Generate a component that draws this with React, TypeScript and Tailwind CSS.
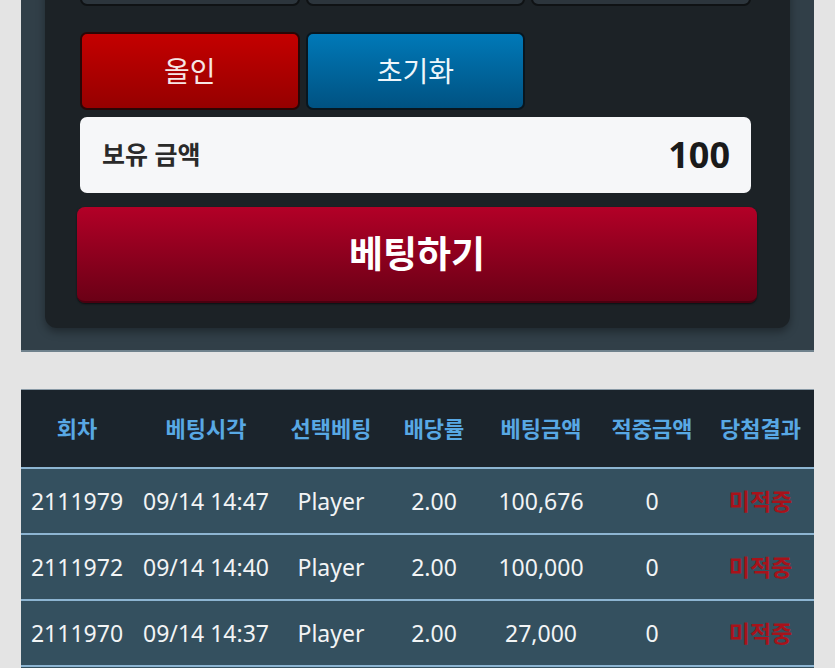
import React from 'react';

// Betting panel + recent bets table
const BETS = [
  { round: '2111979', time: '09/14 14:47', pick: 'Player', odds: '2.00', amount: '100,676', win: '0', result: '미적중' },
  { round: '2111972', time: '09/14 14:40', pick: 'Player', odds: '2.00', amount: '100,000', win: '0', result: '미적중' },
  { round: '2111970', time: '09/14 14:37', pick: 'Player', odds: '2.00', amount: '27,000', win: '0', result: '미적중' },
];

const HEADERS = ['회차', '베팅시각', '선택베팅', '배당률', '베팅금액', '적중금액', '당첨결과'];

const FONT = { fontFamily: '"Noto Sans", "Noto Sans CJK KR", sans-serif' };

export default function App() {
  return (
    <div className="h-[668px] overflow-hidden bg-[#e4e4e4]" style={FONT}>
      {/* Bet panel */}
      <div className="mx-[21px] w-[793px] -mt-[80px] bg-[#313f48] border-b-2 border-[#6f818c] px-[24px] pb-[22px]">
        <div className="rounded-b-[12px] bg-[#1c2226] pl-[35px] pr-[39px] pt-[8px] pb-[25px] shadow-[0_4px_8px_rgba(0,0,0,0.35)]">
          {/* chip row (mostly scrolled off) */}
          <div className="grid grid-cols-3 gap-[6px]">
            {[0, 1, 2].map((i) => (
              <div key={i} className="h-[78px] rounded-[7px] border-2 border-[#0f1214] bg-[#2c353c]" />
            ))}
          </div>

          <div className="mt-[26px] grid grid-cols-3 gap-[6px]">
            <button className="flex h-[78px] items-center justify-center rounded-[7px] border-2 border-[#2a0606] bg-gradient-to-b from-[#c40000] to-[#960000] text-[28px] text-[#f6e6e6]">
              올인
            </button>
            <button className="flex h-[78px] items-center justify-center rounded-[7px] border-2 border-[#08161f] bg-gradient-to-b from-[#0079b8] to-[#005282] text-[28px] text-[#eef6fb]">
              초기화
            </button>
          </div>

          <div className="mt-[7px] flex h-[76px] items-center justify-between rounded-[7px] bg-[#f6f7f9] pl-[22px] pr-[21px]">
            <span className="text-[25px] font-bold text-[#2a2a2a]">보유 금액</span>
            <span className="text-[36px] font-bold text-[#1a1a1a]">100</span>
          </div>

          <button className="-ml-[3px] -mr-[6px] mt-[14px] flex h-[96px] w-[calc(100%+9px)] items-center justify-center rounded-[8px] border-b-2 border-[#4a0010] bg-gradient-to-b from-[#b30027] to-[#6b0016] text-[37px] font-bold text-white shadow-[0_1px_2px_rgba(0,0,0,0.6)]">
            베팅하기
          </button>
        </div>
      </div>

      {/* Bet history */}
      <div className="mx-[21px] mt-[37px] w-[793px] border-t border-[#8a9aa6]">
        <div className="grid h-[77px] grid-cols-[112px_146px_104px_102px_112px_110px_1fr] items-center bg-[#1b242c]">
          {HEADERS.map((h) => (
            <div key={h} className="text-center text-[22px] font-bold text-[#58a8e4]">
              {h}
            </div>
          ))}
        </div>
        {BETS.map((b) => (
          <div
            key={b.round}
            className="grid h-[66px] grid-cols-[112px_146px_104px_102px_112px_110px_1fr] items-center border-t-2 border-[#8db5d2] bg-[#34505f] text-[23px] text-[#f2f4f5]"
          >
            <div className="text-center">{b.round}</div>
            <div className="text-center">{b.time}</div>
            <div className="text-center">{b.pick}</div>
            <div className="text-center">{b.odds}</div>
            <div className="text-center">{b.amount}</div>
            <div className="text-center">{b.win}</div>
            <div className="text-center text-[23px] font-bold text-[#a8121a]">{b.result}</div>
          </div>
        ))}
        {/* next row, just peeking in at the bottom */}
        <div className="h-[66px] border-t-2 border-[#8db5d2] bg-[#34505f]" />
      </div>
    </div>
  );
}
